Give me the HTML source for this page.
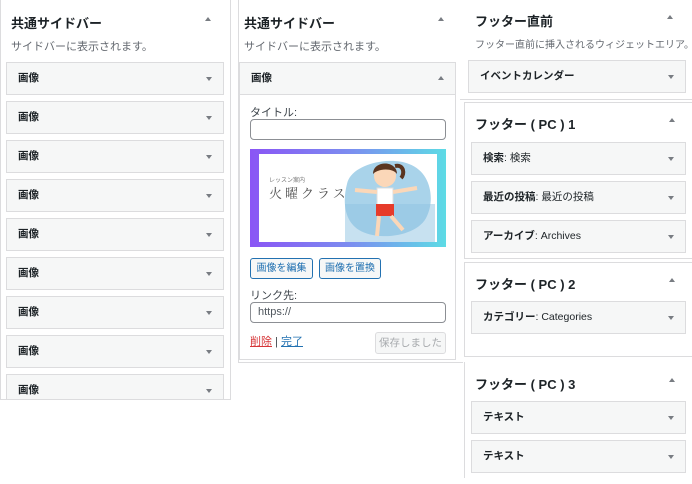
<!DOCTYPE html>
<html><head><meta charset="utf-8"><style>
*{box-sizing:border-box;margin:0;padding:0}
body{width:692px;height:484px;background:#fff;font-family:"Liberation Sans","Noto Sans CJK JP",sans-serif;color:#1d2327;position:relative;overflow:hidden}
.a{position:absolute}
.panel{position:absolute;border:1px solid #dcdcde;background:#fff}
.t{position:absolute;font-size:13px;font-weight:bold;color:#1d2327;white-space:nowrap}
.d{position:absolute;font-size:11px;color:#646970;white-space:nowrap}
.up{position:absolute;width:0;height:0;border-left:3px solid transparent;border-right:3px solid transparent;border-bottom:4px solid #787c82}
.w{position:absolute;height:33px;border:1px solid #dcdcde;background:#f6f7f7;font-size:10.5px;font-weight:bold;line-height:31px;padding-left:11px;color:#1d2327}
.w::after{content:"";position:absolute;right:11px;top:14px;border-left:3px solid transparent;border-right:3px solid transparent;border-top:4px solid #787c82}
.w span{font-weight:normal}
.inp{position:absolute;border:1px solid #8c8f94;border-radius:4px;background:#fff;height:21px;font-size:11px;color:#50575e;padding-left:7px;line-height:19px}
.btn{position:absolute;border:1px solid #2271b1;border-radius:3px;background:#f6f7f7;color:#2271b1;font-size:10px;text-align:center;line-height:19px;height:21px}
.lb{position:absolute;font-size:11px;color:#3c434a}
</style></head><body>
<div class="panel" style="left:0;top:-1px;width:231px;height:401px"></div>
<div class="t" style="left:11px;top:13px">共通サイドバー</div>
<div class="up" style="left:205px;top:17px"></div>
<div class="d" style="left:11px;top:38px">サイドバーに表示されます。</div>
<div class="w" style="left:6px;top:62px;width:218px">画像</div>
<div class="w" style="left:6px;top:101px;width:218px">画像</div>
<div class="w" style="left:6px;top:140px;width:218px">画像</div>
<div class="w" style="left:6px;top:179px;width:218px">画像</div>
<div class="w" style="left:6px;top:218px;width:218px">画像</div>
<div class="w" style="left:6px;top:257px;width:218px">画像</div>
<div class="w" style="left:6px;top:296px;width:218px">画像</div>
<div class="w" style="left:6px;top:335px;width:218px">画像</div>
<div class="w" style="left:6px;top:374px;width:218px">画像</div>
<div class="a" style="left:0;top:400px;width:240px;height:84px;background:#fff"></div>
<div class="a" style="left:0;top:399px;width:231px;height:1px;background:#dcdcde"></div>

<div class="panel" style="left:238px;top:-1px;width:225px;height:364px;border-right:none"></div>
<div class="t" style="left:244px;top:13px">共通サイドバー</div>
<div class="up" style="left:438px;top:17px"></div>
<div class="d" style="left:244px;top:38px">サイドバーに表示されます。</div>
<div class="a" style="left:239px;top:62px;width:217px;height:298px;border:1px solid #dcdcde;background:#fff"></div>
<div class="a" style="left:239px;top:62px;width:217px;height:33px;border:1px solid #dcdcde;background:#f6f7f7;font-size:10.5px;font-weight:bold;line-height:31px;padding-left:11px">画像</div>
<div class="up" style="left:438px;top:76px"></div>
<div class="lb" style="left:250px;top:104px">タイトル:</div>
<div class="inp" style="left:250px;top:119px;width:196px"></div>
<div class="a" style="left:250px;top:149px;width:196px;height:98px;background:linear-gradient(90deg,#8a55f5,#7c8cf0 50%,#5ddbe5)"></div>
<div class="a" style="left:259px;top:154px;width:178px;height:88px;background:#fff;overflow:hidden">
<svg width="178" height="88" viewBox="0 0 178 88">
<path d="M88 30 C92 10 130 2 150 10 C172 18 176 45 168 62 C160 82 120 88 100 76 C84 66 84 45 88 30Z" fill="#a9d3ea"/>
<rect x="86" y="50" width="90" height="38" fill="#8fc3e2" opacity=".5"/>
<circle cx="126" cy="22" r="11" fill="#fbd7b8"/>
<path d="M114 20 C114 6 138 6 138 20 C134 14 120 14 114 20Z" fill="#5a3520"/>
<path d="M136 12 C145 10 146 20 142 24" stroke="#5a3520" stroke-width="4" fill="none"/>
<rect x="118" y="34" width="16" height="17" fill="#fff" stroke="#ddd"/>
<path d="M118 38 L96 36 M134 38 L158 34" stroke="#fbd7b8" stroke-width="4"/>
<rect x="117" y="50" width="18" height="12" fill="#e63b2a"/>
<path d="M120 62 L118 82 M132 62 L144 76" stroke="#fbd7b8" stroke-width="4"/>
<text x="10" y="28" font-size="6" fill="#777" font-family="Noto Sans CJK JP">レッスン案内</text>
<text x="10" y="44" font-size="13" fill="#555" letter-spacing="3" font-family="Noto Serif CJK SC">火曜クラス</text>
</svg></div>
<div class="btn" style="left:250px;top:258px;width:63px">画像を編集</div>
<div class="btn" style="left:319px;top:258px;width:62px">画像を置換</div>
<div class="lb" style="left:250px;top:287px">リンク先:</div>
<div class="inp" style="left:250px;top:302px;width:196px">https://</div>
<div class="a" style="left:250px;top:333px;font-size:11px;color:#3c434a"><span style="color:#d63638;text-decoration:underline">削除</span> | <span style="color:#2271b1;text-decoration:underline">完了</span></div>
<div class="a" style="left:375px;top:332px;width:71px;height:22px;border:1px solid #dcdcde;border-radius:3px;background:#f6f7f7;color:#a7aaad;font-size:10.5px;text-align:center;line-height:20px">保存しました</div>

<div class="t" style="left:475px;top:11px">フッター直前</div>
<div class="up" style="left:667px;top:15px"></div>
<div class="d" style="left:475px;top:36px;font-size:10px">フッター直前に挿入されるウィジェットエリア。</div>
<div class="w" style="left:468px;top:60px;width:218px">イベントカレンダー</div>
<div class="a" style="left:460px;top:99px;width:232px;height:1px;background:#dcdcde"></div>

<div class="a" style="left:464px;top:102px;width:240px;height:157px;border:1px solid #dcdcde"></div>
<div class="t" style="left:475px;top:114px">フッター ( PC ) 1</div>
<div class="up" style="left:669px;top:118px"></div>
<div class="w" style="left:471px;top:142px;width:215px">検索<span>: 検索</span></div>
<div class="w" style="left:471px;top:181px;width:215px">最近の投稿<span>: 最近の投稿</span></div>
<div class="w" style="left:471px;top:220px;width:215px">アーカイブ<span>: Archives</span></div>

<div class="a" style="left:464px;top:262px;width:240px;height:95px;border:1px solid #dcdcde"></div>
<div class="t" style="left:475px;top:274px">フッター ( PC ) 2</div>
<div class="up" style="left:669px;top:278px"></div>
<div class="w" style="left:471px;top:301px;width:215px">カテゴリー<span>: Categories</span></div>

<div class="a" style="left:464px;top:362px;width:1px;height:116px;background:#dcdcde"></div>
<div class="t" style="left:475px;top:374px">フッター ( PC ) 3</div>
<div class="up" style="left:669px;top:378px"></div>
<div class="w" style="left:471px;top:401px;width:215px">テキスト</div>
<div class="w" style="left:471px;top:440px;width:215px">テキスト</div>
</body></html>
